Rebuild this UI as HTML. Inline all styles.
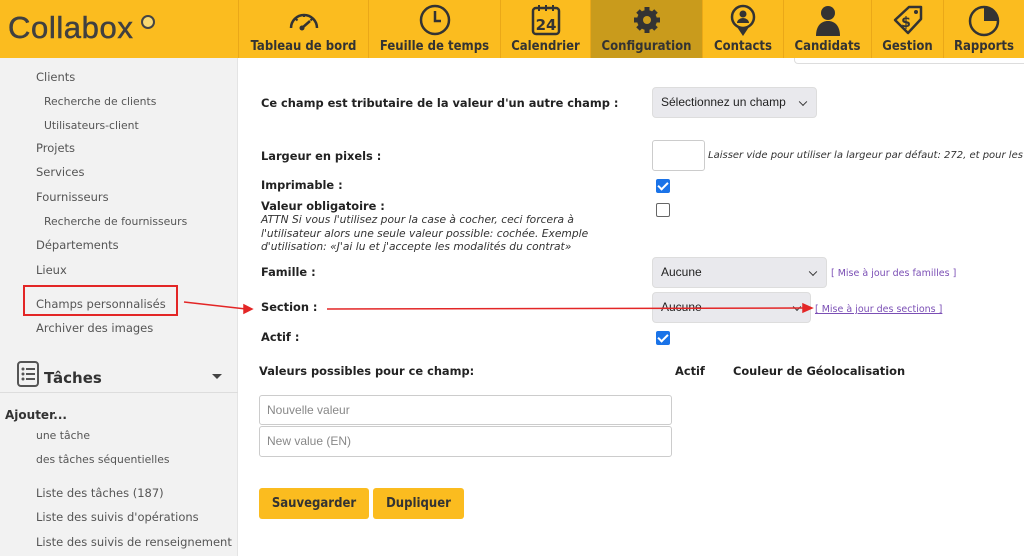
<!DOCTYPE html>
<html><head><meta charset="utf-8"><style>
*{margin:0;padding:0;box-sizing:border-box}
body{width:1024px;height:556px;overflow:hidden;background:#fff;font-family:"DejaVu Sans","Liberation Sans",sans-serif;position:relative;color:#222}
.a{position:absolute;white-space:nowrap}
#hdr{position:absolute;left:0;top:0;width:1024px;height:58px;background:#fbbc1f}
.nav{position:absolute;top:0;height:58px;border-left:1px solid #eaa818;text-align:center}
.nav span{position:absolute;bottom:4px;left:0;right:0;font-weight:bold;font-size:13px;color:#333;font-family:"DejaVu Sans Condensed","DejaVu Sans",sans-serif}
.nav svg{position:absolute;top:4px;left:50%;margin-left:-17px}
#side{position:absolute;left:0;top:58px;width:238px;height:498px;background:#f2f2f2;border-right:1px solid #e4e4e4}
.s{position:absolute;font-size:11.5px;color:#555;white-space:nowrap}
.ss{font-size:10.8px}
.lb{position:absolute;font-size:11.4px;font-weight:bold;color:#222;white-space:nowrap}
.sel{position:absolute;background:#e9e9ed;border:1px solid #ddd;border-radius:4px;font-size:12px;color:#222;padding-left:8px;font-family:"Liberation Sans",sans-serif}
.sel:after{content:"";position:absolute;right:10px;top:50%;width:5px;height:5px;border-right:1.5px solid #333;border-bottom:1.5px solid #333;transform:translateY(-70%) rotate(45deg)}
.cb{position:absolute;width:14px;height:14px;border-radius:2px}
.on{background:#1a73e8}
.on:after{content:"";position:absolute;left:4px;top:1px;width:4px;height:8px;border-right:2px solid #fff;border-bottom:2px solid #fff;transform:rotate(45deg)}
.off{border:1.5px solid #666;background:#fff}
.lk{position:absolute;font-size:9.5px;color:#7b4fb5;white-space:nowrap}
.inp{position:absolute;border:1px solid #ccc;border-radius:3px;background:#fff;font-size:12px;color:#888;padding-left:7px;font-family:"Liberation Sans",sans-serif}
.btn{position:absolute;background:#fbbc1f;border-radius:3px;font-weight:bold;font-size:13px;color:#333;text-align:center;line-height:31px;font-family:"DejaVu Sans Condensed","DejaVu Sans",sans-serif}
</style></head><body>
<div id="hdr">
<div class="a" style="left:8px;top:10px;font-size:31px;letter-spacing:0.6px;color:#404040;font-family:'Liberation Sans',sans-serif;-webkit-text-stroke:0.5px #404040">Collabox</div>
<div class="a" style="left:141px;top:15px;width:14px;height:14px;border-radius:50%;border:2.5px solid #444;background:#f8d870"></div>
<div class="nav" style="left:238px;width:130px"><svg width="34" height="30" viewBox="0 0 34 30"><path d="M4 24 A13 13 0 0 1 30 24" fill="none" stroke="#333" stroke-width="2.5"/><path d="M17 11v2M9 15l1.5 1.5M25 15l-1.5 1.5" stroke="#333" stroke-width="2"/><circle cx="15" cy="24" r="2.5" fill="#333"/><path d="M15 24L23 17" stroke="#333" stroke-width="2.5"/></svg><span>Tableau de bord</span></div>
<div class="nav" style="left:368px;width:132px"><svg width="34" height="32" viewBox="0 0 34 32"><circle cx="17" cy="16" r="14" fill="none" stroke="#333" stroke-width="2.5"/><path d="M17 7v10h6" fill="none" stroke="#333" stroke-width="2.5"/></svg><span>Feuille de temps</span></div>
<div class="nav" style="left:500px;width:90px"><svg width="34" height="32" viewBox="0 0 34 32"><rect x="4" y="4" width="26" height="26" rx="3" fill="none" stroke="#333" stroke-width="2.5"/><path d="M10 1v6M17 1v6M24 1v6" stroke="#333" stroke-width="2"/><text x="17" y="26" font-size="15" font-weight="bold" text-anchor="middle" fill="#333" font-family="DejaVu Sans">24</text></svg><span>Calendrier</span></div>
<div class="nav" style="left:590px;width:112px;background:#c99b1c"><svg width="34" height="32" viewBox="0 0 34 32"><circle cx="17" cy="16" r="10" fill="#333"/><g stroke="#333" stroke-width="5"><path d="M17 3v26M4 16h26M8 7l18 18M26 7L8 25"/></g><circle cx="17" cy="16" r="4" fill="#c99b1c"/></svg><span>Configuration</span></div>
<div class="nav" style="left:702px;width:81px"><svg width="34" height="34" viewBox="0 0 34 34"><circle cx="17" cy="13" r="11" fill="none" stroke="#333" stroke-width="2.5"/><path d="M11 23l6 9 6-9z" fill="#333"/><circle cx="17" cy="10" r="3.5" fill="#333"/><path d="M11 19a6 5 0 0 1 12 0z" fill="#333"/></svg><span>Contacts</span></div>
<div class="nav" style="left:783px;width:88px"><svg width="34" height="34" viewBox="0 0 34 34"><circle cx="17" cy="9" r="7" fill="#333"/><path d="M5 32c0-10 5-15 12-15s12 5 12 15z" fill="#333"/></svg><span>Candidats</span></div>
<div class="nav" style="left:871px;width:72px"><svg width="34" height="34" viewBox="0 0 34 34"><path d="M4 16L18 3h12v12L17 29z" fill="none" stroke="#333" stroke-width="2.5" stroke-linejoin="round"/><circle cx="25" cy="8" r="2" fill="#333"/><text x="15" y="23" font-size="14" font-weight="bold" text-anchor="middle" fill="#333" font-family="DejaVu Sans">$</text></svg><span>Gestion</span></div>
<div class="nav" style="left:943px;width:81px"><svg width="34" height="34" viewBox="0 0 34 34"><circle cx="17" cy="17" r="14" fill="none" stroke="#333" stroke-width="2.5"/><path d="M17 17V3a14 14 0 0 1 14 14z" fill="#333"/></svg><span>Rapports</span></div>
</div>
<div id="side">
<div class="s" style="left:36px;top:12px">Clients</div>
<div class="s ss" style="left:44px;top:37px">Recherche de clients</div>
<div class="s ss" style="left:44px;top:61px">Utilisateurs-client</div>
<div class="s" style="left:36px;top:83px">Projets</div>
<div class="s" style="left:36px;top:107px">Services</div>
<div class="s" style="left:36px;top:132px">Fournisseurs</div>
<div class="s ss" style="left:44px;top:157px">Recherche de fournisseurs</div>
<div class="s" style="left:36px;top:180px">Départements</div>
<div class="s" style="left:36px;top:205px">Lieux</div>
<div style="position:absolute;left:23px;top:227px;width:155px;height:31px;border:2px solid #e32626"></div>
<div class="s" style="left:36px;top:239px">Champs personnalisés</div>
<div class="s" style="left:36px;top:263px">Archiver des images</div>
<svg style="position:absolute;left:17px;top:303px" width="22" height="26" viewBox="0 0 22 26"><rect x="1" y="1" width="20" height="24" rx="3" fill="none" stroke="#555" stroke-width="2"/><g fill="#555"><circle cx="6" cy="8" r="1.5"/><circle cx="6" cy="13" r="1.5"/><circle cx="6" cy="18" r="1.5"/><rect x="9" y="7" width="9" height="2"/><rect x="9" y="12" width="9" height="2"/><rect x="9" y="17" width="9" height="2"/></g></svg>
<div class="a" style="left:44px;top:311px;font-size:15px;font-weight:bold;color:#333">Tâches</div>
<div class="a" style="left:212px;top:316px;border:5px solid transparent;border-top:5px solid #444"></div>
<div style="position:absolute;left:0;top:334px;width:238px;border-top:1px solid #ddd"></div>
<div class="a" style="left:5px;top:350px;font-size:12px;font-weight:bold;color:#333">Ajouter...</div>
<div class="s ss" style="left:36px;top:371px">une tâche</div>
<div class="s ss" style="left:36px;top:395px">des tâches séquentielles</div>
<div class="s" style="left:36px;top:428px">Liste des tâches (187)</div>
<div class="s" style="left:36px;top:452px">Liste des suivis d'opérations</div>
<div class="s" style="left:36px;top:477px">Liste des suivis de renseignement</div>
</div>
<div style="position:absolute;left:794px;top:58px;width:240px;height:6px;border:1px solid #ddd;border-top:none;border-radius:0 0 4px 4px"></div>
<div class="lb" style="left:261px;top:96px">Ce champ est tributaire de la valeur d'un autre champ :</div>
<div class="sel" style="left:652px;top:87px;width:165px;height:31px;line-height:29px">Sélectionnez un champ</div>
<div class="lb" style="left:261px;top:149px">Largeur en pixels :</div>
<div class="inp" style="left:652px;top:140px;width:53px;height:31px"></div>
<div class="a" style="left:708px;top:150px;font-size:10px;font-style:italic;color:#333">Laisser vide pour utiliser la largeur par défaut: 272, et pour les c</div>
<div class="lb" style="left:261px;top:178px">Imprimable :</div>
<div class="cb on" style="left:656px;top:179px"></div>
<div class="lb" style="left:261px;top:199px">Valeur obligatoire :</div>
<div class="cb off" style="left:656px;top:203px"></div>
<div class="a" style="left:261px;top:213px;font-size:10.7px;font-style:italic;color:#333;line-height:13.5px">ATTN Si vous l'utilisez pour la case à cocher, ceci forcera à<br>l'utilisateur alors une seule valeur possible: cochée. Exemple<br>d'utilisation: «J'ai lu et j'accepte les modalités du contrat»</div>
<div class="lb" style="left:261px;top:265px">Famille :</div>
<div class="sel" style="left:652px;top:257px;width:175px;height:31px;line-height:29px">Aucune</div>
<div class="lk" style="left:831px;top:268px">[ Mise à jour des familles ]</div>
<div class="lb" style="left:261px;top:300px">Section :</div>
<div class="sel" style="left:652px;top:292px;width:159px;height:31px;line-height:29px">Aucune</div>
<div class="lk" style="left:815px;top:304px;text-decoration:underline">[ Mise à jour des sections ]</div>
<div class="lb" style="left:261px;top:330px">Actif :</div>
<div class="cb on" style="left:656px;top:331px"></div>
<div class="lb" style="left:259px;top:364px">Valeurs possibles pour ce champ:</div>
<div class="lb" style="left:675px;top:364px">Actif</div>
<div class="lb" style="left:733px;top:364px">Couleur de Géolocalisation</div>
<div class="inp" style="left:259px;top:395px;width:413px;height:30px;line-height:28px">Nouvelle valeur</div>
<div class="inp" style="left:259px;top:426px;width:413px;height:31px;line-height:29px">New value (EN)</div>
<div class="btn" style="left:259px;top:488px;width:110px;height:31px">Sauvegarder</div>
<div class="btn" style="left:373px;top:488px;width:91px;height:31px">Dupliquer</div>
<svg style="position:absolute;left:0;top:0" width="1024" height="556"><g stroke="#e32626" stroke-width="1.5" fill="#e32626"><path d="M184 302L246 309"/><path d="M252 309l-8-4v8z"/><path d="M327 309L805 308"/><path d="M812 308l-9-4v8z"/></g></svg>
</body></html>
